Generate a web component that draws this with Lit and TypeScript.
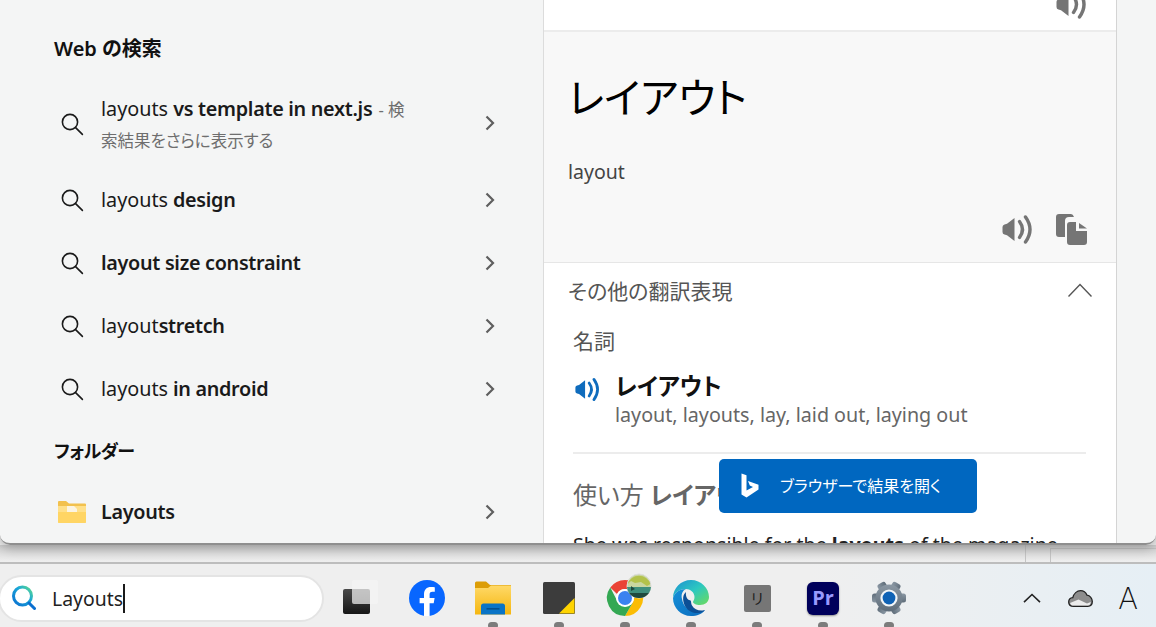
import { LitElement, html, css, svg } from "lit";
import { customElement } from "lit/decorators.js";

const searchIcon = html`<svg class="row-icon" width="24" height="24" viewBox="0 0 24 24" fill="none" stroke="#1a1a1a" stroke-width="1.6">
  <circle cx="10" cy="10" r="7.6"></circle><path d="M15.6 15.6 L22.4 22.4" stroke-linecap="round"></path>
</svg>`;

const chevron = html`<svg class="chev" width="12" height="16" viewBox="0 0 12 16" fill="none" stroke="#5f5f5f" stroke-width="2.2">
  <path d="M2.5 1.5 L9 8 L2.5 14.5"></path>
</svg>`;

const speaker = (color: string, w = 31, h = 29) => html`<svg width=${w} height=${h} viewBox="0 0 31 29" fill="none">
  <path fill=${color} d="M0.5 12 Q0.5 10 2.5 9.5 L5 8.8 L12.5 3 V26 L5 20.2 L2.5 19.5 Q0.5 19 0.5 17 Z"></path>
  <path stroke=${color} stroke-width="3.4" stroke-linecap="round" d="M17.5 6.5 Q23.5 14.5 17.5 22.5"></path>
  <path stroke=${color} stroke-width="3.4" stroke-linecap="round" d="M23.5 2 Q32.5 14.5 23.5 27"></path>
</svg>`;

const copyIcon = html`<svg width="31" height="31" viewBox="0 0 31 31" fill="#757575">
  <path d="M3 0 H15 Q17 0 18 3 H13 Q9 3 9 7 V23 H3 Q0 23 0 20 V3 Q0 0 3 0Z"></path>
  <path d="M14 8 H20 V17 H31 V28 Q31 31 28 31 H14 Q11 31 11 28 V11 Q11 8 14 8Z"></path>
  <path d="M23 9 L31 14.5 H23Z"></path>
</svg>`;

const suggestions = [
  { plain: "layouts", bold: " design" },
  { plain: "", bold: "layout size constraint" },
  { plain: "layout", bold: "stretch" },
  { plain: "layouts", bold: " in android" },
];

const gearTeeth = [0, 60, 120, 180, 240, 300];

const taskIcons = [
  {
    dot: false,
    icon: html`<svg width="36" height="36" viewBox="0 0 36 36">
      <defs><linearGradient id="tv" x1="0" y1="0" x2="0" y2="1"><stop offset="0" stop-color="#4a4a4a"></stop><stop offset="1" stop-color="#161616"></stop></linearGradient></defs>
      <rect x="0" y="9" width="27" height="25" rx="2" fill="url(#tv)"></rect>
      <rect x="9" y="0" width="26" height="24" rx="2" fill="#f4f4f4" fill-opacity=".72"></rect>
    </svg>`,
  },
  {
    dot: false,
    icon: html`<svg width="36" height="36" viewBox="0 0 36 36">
      <circle cx="18" cy="18" r="18" fill="#0866ff"></circle>
      <path fill="#fff" d="M15 36 V23.3 H10.6 V18 H15 V14.4 C15 9.6 17.6 7 22 7 C23.6 7 25.2 7.2 25.8 7.3 V11.8 H23.4 C21.2 11.8 20.6 13 20.6 14.8 V18 H25.6 L24.7 23.3 H20.6 V36 Z"></path>
    </svg>`,
  },
  {
    dot: true,
    icon: html`<svg width="36" height="36" viewBox="0 0 36 36">
      <defs><linearGradient id="fo" x1="0" y1="0" x2="0" y2="1"><stop offset="0" stop-color="#ffd968"></stop><stop offset="1" stop-color="#f5b60f"></stop></linearGradient></defs>
      <path fill="#dc9d06" d="M0 3 Q0 1.5 1.5 1.5 H11 L15 5 H36 V12 H0Z"></path>
      <path fill="url(#fo)" d="M0 8 H13 L16 5.5 H36 V34.5 H0Z"></path>
      <path fill="#0a74c6" d="M6 34.5 V26 Q6 23.5 8.5 23.5 H27.5 Q30 23.5 30 26 V34.5Z"></path>
      <rect x="11.5" y="28" width="13" height="1.6" fill="#04508f"></rect>
    </svg>`,
  },
  {
    dot: true,
    icon: html`<svg width="32" height="32" viewBox="0 0 32 32">
      <rect width="32" height="32" rx="1.5" fill="#3c3c3c"></rect>
      <path fill="#ffd400" d="M31.5 16 V31.5 H16Z"></path>
    </svg>`,
  },
  {
    dot: true,
    icon: html`<svg class="over" width="36" height="36" viewBox="0 0 36 36">
      <path fill="#ea4335" d="M18 0 A18 18 0 0 1 33.6 9 H18 A9 9 0 0 0 10 14 L3.3 7.6 A18 18 0 0 1 18 0Z"></path>
      <path fill="#fbbc04" d="M33.6 9 A18 18 0 0 1 18 36 L25.8 22.5 A9 9 0 0 0 25.8 13.5 L24 9Z"></path>
      <path fill="#34a853" d="M3.3 7.6 L11 22.5 A9 9 0 0 0 25.8 22.5 L18 36 A18 18 0 0 1 3.3 7.6Z"></path>
      <circle cx="18" cy="18" r="9" fill="#fff"></circle>
      <circle cx="18" cy="18" r="7" fill="#3b82f0"></circle>
      <circle cx="32" cy="6" r="12" fill="#c9d6a0" stroke="#ddd" stroke-width="1"></circle>
      <path fill="#b3c24b" d="M20.6 4 A12 12 0 0 1 43.4 4 L40 6 L34 2 L28 3 L24 1Z"></path>
      <path fill="#3f8f7c" d="M20 7 H44 A12 12 0 0 1 42 13 H22 A12 12 0 0 1 20 7Z"></path>
      <path fill="#1f4a3e" d="M22 13 H42 A12 12 0 0 1 32 18 A12 12 0 0 1 22 13Z M24 6 L28 9 L24 11Z"></path>
    </svg>`,
  },
  {
    dot: true,
    icon: html`<svg width="36" height="36" viewBox="0 0 36 36">
      <defs>
        <linearGradient id="ed1" x1="0" y1="0" x2="1" y2="1"><stop offset="0" stop-color="#1c8fd3"></stop><stop offset=".5" stop-color="#2cc8c0"></stop><stop offset="1" stop-color="#6edb5a"></stop></linearGradient>
        <linearGradient id="ed2" x1="0" y1="0" x2="1" y2="1"><stop offset="0" stop-color="#1590d8"></stop><stop offset="1" stop-color="#0c6bbd"></stop></linearGradient>
      </defs>
      <path fill="url(#ed1)" d="M18 0 C28 0 36 8 36 17 C36 22 32 25 27 25 C23 25 20 23.5 20 22 C20 21 21.5 20 21.5 17 C21.5 12 17 9 13 9 C7 9 2 12 0 18 C0 8 8 0 18 0Z"></path>
      <path fill="url(#ed2)" d="M0 18 C2 12 7 9 13 9 C9 11 8 15 9 19 C10 26 16 32 24 32 C27 32 30 31 32 30 C29 34 24 36 18 36 C8 36 0 28 0 18Z"></path>
      <path fill="#0c4f96" d="M13 12 C9.5 15 9.5 20 11.5 25 C14 31 21 34.5 28 32.5 C29.8 32 31 31 32 30 C27 31.5 21.5 30 19 25.5 C17.5 23 19 20 16 20 C13.5 19 12.5 15 13 12Z"></path>
    </svg>`,
  },
  {
    dot: true,
    icon: html`<div class="ri">リ</div>`,
  },
  {
    dot: true,
    icon: html`<div class="pr">Pr</div>`,
  },
  {
    dot: true,
    icon: html`<svg width="36" height="36" viewBox="0 0 36 36">
      <defs><linearGradient id="ge" x1="0" y1="0" x2="0" y2="1"><stop offset="0" stop-color="#8b98a4"></stop><stop offset="1" stop-color="#5f6d7a"></stop></linearGradient></defs>
      <g fill="url(#ge)">
        ${gearTeeth.map(
          (a) => svg`<rect x="27" y="13.5" width="8" height="9" rx="2.5" transform="rotate(${a} 18 18)"></rect>`
        )}
        <circle cx="18" cy="18" r="13.5"></circle>
      </g>
      <circle cx="18" cy="18" r="8.6" fill="#f2f5f7"></circle>
      <circle cx="18" cy="18" r="6.4" fill="#0f62b5"></circle>
    </svg>`,
  },
];

@customElement("app-root")
export class AppRoot extends LitElement {
  static styles = css`
    :host {
      display: block;
      width: 1156px;
      height: 627px;
      overflow: hidden;
      font-family: "Noto Sans", "Noto Sans CJK JP", sans-serif;
      font-feature-settings: "palt";
      background: #f0f0f0;
    }
    .flyout {
      position: relative;
      z-index: 1;
      display: flex;
      height: 545px;
      box-sizing: border-box;
      overflow: hidden;
      background: #f4f5f5;
      border-bottom: 2px solid #8f8f8f;
      border-radius: 0 0 10px 10px;
    }
    .shadow {
      position: relative;
      z-index: 1;
      box-shadow: 0 3px 12px rgba(0, 0, 0, 0.28);
      border-radius: 0 0 10px 10px;
    }

    /* left column */
    .left {
      width: 543px;
      flex: none;
      box-sizing: border-box;
      padding: 33px 0 0 54px;
    }
    .heading {
      height: 32px;
      line-height: 32px;
      font-size: 20px;
      font-weight: 600;
      color: #111;
    }
    .heading.second {
      margin-top: 15px;
      font-size: 18px;
      letter-spacing: -0.6px;
    }
    .row {
      display: flex;
      align-items: center;
      height: 63px;
      padding-left: 6px;
      font-size: 19.8px;
      color: #1a1a1a;
    }
    .row.tall {
      height: 90px;
      margin-top: 13px;
    }
    .row.folder-row {
      margin-top: 13px;
    }
    .row-icon {
      flex: none;
      margin-top: 1px;
    }
    .row-text {
      width: 316px;
      margin-left: 17px;
      line-height: 30px;
    }
    .row.tall .row-text {
      padding-top: 3px;
    }
    .row-text b {
      font-weight: 600;
      letter-spacing: -0.3px;
    }
    .row-text .hint {
      color: #6e6e6e;
      font-size: 16.5px;
      margin-left: 1px;
    }
    .row-folder {
      flex: none;
      margin-left: -2px;
      margin-right: -2px;
    }
    .chev {
      flex: none;
      margin-left: 67px;
    }

    /* right column */
    .right {
      position: relative;
      width: 574px;
      flex: none;
      box-sizing: border-box;
      background: #fff;
      border-left: 1px solid #dcdcdc;
      border-right: 1px solid #d4d4d4;
    }
    .top-strip {
      display: flex;
      justify-content: flex-end;
      align-items: flex-end;
      height: 32px;
      box-sizing: border-box;
      padding: 0 29px 11px 0;
      border-bottom: 2px solid #ececec;
      overflow: hidden;
    }
    .translation {
      height: 231px;
      box-sizing: border-box;
      padding: 40px 29px 0 24px;
      background: #f8f8f8;
      border-bottom: 1px solid #e6e6e6;
    }
    .translation h1 {
      margin: 0;
      font-size: 41px;
      line-height: 50px;
      font-weight: 400;
      color: #000;
    }
    .roman {
      margin-top: 35px;
      font-size: 19.5px;
      line-height: 30px;
      color: #444;
    }
    .tools {
      display: flex;
      justify-content: flex-end;
      gap: 23px;
      margin-top: 27px;
      align-items: center;
    }
    .more {
      padding: 12px 24px 0 24px;
    }
    .more-head {
      display: flex;
      align-items: center;
      justify-content: space-between;
      height: 30px;
      font-size: 21px;
      color: #555;
    }
    .body {
      padding-left: 5px;
      padding-right: 6px;
    }
    .pos {
      margin-top: 21px;
      font-size: 21px;
      line-height: 30px;
      color: #555;
    }
    .entry {
      display: flex;
      gap: 15px;
      margin-top: 17px;
      padding-left: 2px;
    }
    .entry svg {
      flex: none;
      margin-top: 4px;
    }
    .entry-title {
      font-size: 23.5px;
      line-height: 27px;
      font-weight: 700;
      color: #111;
    }
    .entry-sub {
      margin-top: 1px;
      font-size: 19.7px;
      line-height: 28px;
      color: #666;
    }
    .rule {
      height: 2px;
      margin-top: 23px;
      background: #ececec;
    }
    .usage {
      margin-top: 23px;
      font-size: 24px;
      line-height: 36px;
      color: #666;
    }
    .sentence {
      margin-top: 18px;
      font-size: 19.6px;
      line-height: 28px;
      color: #222;
      white-space: nowrap;
    }
    .open-btn {
      position: absolute;
      left: 175px;
      top: 459px;
      display: flex;
      align-items: center;
      width: 258px;
      height: 54px;
      box-sizing: border-box;
      padding: 0 0 2px 22px;
      background: #0067c0;
      border-radius: 5px;
      color: #fff;
      font-size: 16px;
    }
    .open-btn svg {
      margin-right: 21px;
    }
    .gutter {
      flex: 1;
    }

    /* strip behind the flyout */
    .behind {
      display: flex;
      justify-content: flex-end;
      height: 17px;
      background: linear-gradient(#d0d0d0, #efefef);
    }
    .pane-a {
      width: 24px;
      border-left: 1px solid #c4c4c4;
    }
    .pane-b {
      width: 105px;
      margin-top: 3px;
      border-left: 1px solid #c4c4c4;
      border-top: 1px solid #c4c4c4;
    }

    /* taskbar */
    .taskbar {
      display: flex;
      align-items: center;
      height: 65px;
      box-sizing: border-box;
      padding-top: 5px;
      border-top: 2px solid #bdbdbd;
      background: linear-gradient(90deg, #efefef 0%, #efefef 70%, #e6eff5 100%);
      overflow: hidden;
    }
    .search {
      display: flex;
      align-items: center;
      flex: none;
      width: 326px;
      height: 47px;
      box-sizing: border-box;
      margin-left: -2px;
      margin-right: 4px;
      padding-left: 12px;
      background: #fff;
      border: 2px solid #e4e4e4;
      border-radius: 24px;
      font-size: 19.4px;
      color: #222;
    }
    .search-text {
      margin-left: 16px;
      height: 29px;
      line-height: 29px;
      padding-right: 0;
      border-right: 2px solid #1a1a1a;
    }
    .task {
      position: relative;
      display: flex;
      align-items: center;
      justify-content: center;
      flex: none;
      width: 66px;
      height: 58px;
    }
    .over {
      overflow: visible;
    }
    .dot {
      position: absolute;
      left: 28px;
      top: 53px;
      width: 10px;
      height: 7px;
      border-radius: 4px;
      background: #7c7c7c;
    }
    .ri {
      width: 27px;
      height: 27px;
      line-height: 27px;
      text-align: center;
      background: #767676;
      border-radius: 2px;
      font-size: 15px;
      color: #222;
    }
    .pr {
      width: 32px;
      height: 33px;
      line-height: 32px;
      text-align: center;
      background: #00005b;
      border-radius: 6px;
      box-shadow: 0 1px 2px rgba(0, 0, 0, 0.4);
      font-family: "Open Sans", sans-serif;
      font-weight: 700;
      font-size: 20px;
      color: #9999ff;
    }
    .tray {
      display: flex;
      margin-left: auto;
      padding-right: 4px;
    }
    .tray-item {
      display: flex;
      align-items: center;
      justify-content: center;
      width: 48px;
      height: 40px;
    }
    .ime {
      font-family: Inter, sans-serif;
      font-weight: 200;
      font-size: 30px;
      color: #111;
    }
  `;

  render() {
    return html`
      <div class="shadow">
        <div class="flyout">
          <div class="left">
            <div class="heading">Web の検索</div>
            <div class="row tall">
              ${searchIcon}
              <div class="row-text">
                layouts <b>vs template in next.js</b>
                <span class="hint">- 検索結果をさらに表示する</span>
              </div>
              ${chevron}
            </div>
            ${suggestions.map(
              (s) => html`<div class="row">
                ${searchIcon}
                <div class="row-text">${s.plain}<b>${s.bold}</b></div>
                ${chevron}
              </div>`
            )}
            <div class="heading second">フォルダー</div>
            <div class="row folder-row">
              <svg class="row-folder" width="28" height="22" viewBox="0 0 28 22">
                <path fill="#f2c14e" d="M0 1 Q0 0 1 0 H8 L11 2.5 H27 Q28 2.5 28 3.5 V8 H0Z"></path>
                <path fill="#ffe08a" d="M0 5 H28 V21 Q28 22 27 22 H1 Q0 22 0 21Z"></path>
                <path fill="#fbf4e2" d="M9 5 H16 L19 8 V11 H9Z"></path>
                <path fill="#ffd564" d="M0 11 H28 V21 Q28 22 27 22 H1 Q0 22 0 21Z"></path>
              </svg>
              <div class="row-text"><b>Layouts</b></div>
              ${chevron}
            </div>
          </div>

          <div class="right">
            <div class="top-strip">${speaker("#757575")}</div>
            <div class="translation">
              <h1>レイアウト</h1>
              <div class="roman">layout</div>
              <div class="tools">${speaker("#757575")} ${copyIcon}</div>
            </div>
            <div class="more">
              <div class="more-head">
                <span>その他の翻訳表現</span>
                <svg width="24" height="14" viewBox="0 0 24 14" fill="none" stroke="#555" stroke-width="1.4">
                  <path d="M0.5 13.5 L12 1.5 L23.5 13.5"></path>
                </svg>
              </div>
              <div class="body">
                <div class="pos">名詞</div>
                <div class="entry">
                  ${speaker("#0f6cbd", 25, 25)}
                  <div>
                    <div class="entry-title">レイアウト</div>
                    <div class="entry-sub">layout, layouts, lay, laid out, laying out</div>
                  </div>
                </div>
                <div class="rule"></div>
                <div class="usage">使い方 <b>レイアウト</b></div>
                <div class="sentence">She was responsible for the <b>layouts</b> of the magazine</div>
              </div>
            </div>
            <div class="open-btn">
              <svg width="18" height="25" viewBox="0 0 18 25" fill="#fff">
                <path d="M0.5 0.5 L5.5 2.2 V17.5 L12 14 L8.8 12.5 L7 8 L17.5 11.7 V16.5 L5.5 24.5 L0.5 21.5Z"></path>
              </svg>
              <span>ブラウザーで結果を開く</span>
            </div>
          </div>
          <div class="gutter"></div>
        </div>
      </div>

      <div class="behind">
        <div class="pane-a"></div>
        <div class="pane-b"></div>
      </div>

      <div class="taskbar">
        <div class="search">
          <svg width="24" height="26" viewBox="0 0 24 26" fill="none" stroke-width="3">
            <defs>
              <linearGradient id="sg" x1="0" y1="1" x2="1" y2="0">
                <stop offset="0" stop-color="#0a6fd0"></stop>
                <stop offset=".6" stop-color="#1aa7d8"></stop>
                <stop offset="1" stop-color="#5fdc8a"></stop>
              </linearGradient>
            </defs>
            <circle cx="10.5" cy="11" r="9" stroke="url(#sg)"></circle>
            <path d="M17 18 L22.5 23.5" stroke="#0a6fd0" stroke-linecap="round"></path>
          </svg>
          <span class="search-text">Layouts</span>
        </div>
        ${taskIcons.map(
          (t) => html`<div class="task">
            ${t.icon} ${t.dot ? html`<div class="dot"></div>` : ""}
          </div>`
        )}
        <div class="tray">
          <div class="tray-item">
            <svg width="18" height="10" viewBox="0 0 18 10" fill="none" stroke="#222" stroke-width="1.6">
              <path d="M1 9.2 L9 1.5 L17 9.2"></path>
            </svg>
          </div>
          <div class="tray-item">
            <svg width="25" height="17" viewBox="0 0 25 17">
              <path fill="#8d8d8d" stroke="#222" stroke-width="1.3" d="M5.5 16.3 C2.5 16.3 0.7 14.5 0.7 12 C0.7 9.6 2.5 7.9 4.8 7.7 C5.8 3.6 9 0.7 12.5 0.7 C15.6 0.7 17.8 2.4 19 5.2 C22 5.6 24.3 8.4 24.3 11.5 C24.3 14.5 22.3 16.3 19.8 16.3 Z"></path>
              <path fill="#ececec" d="M2 13 L10.5 9.5 L19 13.5 L22.8 12 C22.5 14.3 21.3 15.6 19.8 15.6 H5.5 C3.8 15.6 2.5 14.6 2 13Z"></path>
            </svg>
          </div>
          <div class="tray-item"><span class="ime">A</span></div>
        </div>
      </div>
    `;
  }
}
